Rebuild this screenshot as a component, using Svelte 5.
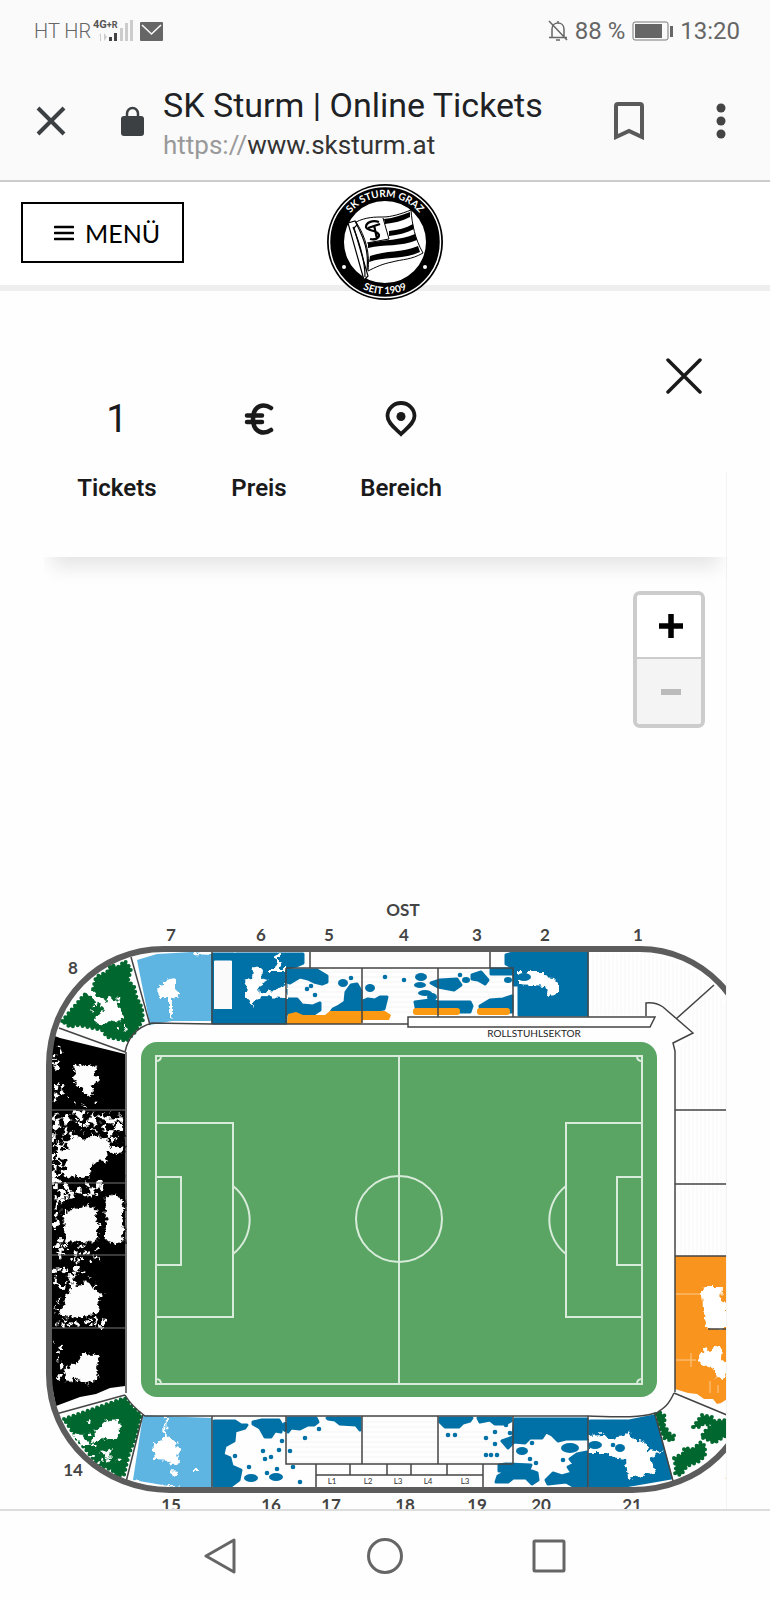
<script>
    let tickets = 1;
    let zoom = 0;

    const DARK = "#0071a6";
    const ORANGE = "#fb9a12";

    const labels = [
        ["OST", 403, 915], ["7", 171, 940], ["6", 261, 940], ["5", 329, 940],
        ["4", 404, 940], ["3", 477, 940], ["2", 545, 940], ["1", 638, 940],
        ["8", 73, 973], ["14", 73, 1475], ["15", 171, 1510], ["16", 271, 1510],
        ["17", 331, 1510], ["18", 405, 1510], ["19", 477, 1510],
        ["20", 541, 1510], ["21", 632, 1510], ["22", 735, 1478],
    ];

    const boxes = [["L1", 332], ["L2", 368], ["L3", 398], ["L4", 428], ["L3", 465]];

    const bluePaths = [
        // 6
        "M213 953H234L236 956 231 958H213V1009H233V959L236 953 303 953 303 962 296 965 286 967V1022H213Z",
        // 5
        "M287 969H304L317 969 327 975 327 981 322 983 314 981 308 978 300 976 290 982 287 981Z",
        "M287 998H297L302 1004 313 1005 320 1002 320 1009 314 1013H287Z",
        "M345 1001L346 991 351 984 357 983 361 990V1011H331L333 1008 339 1005Z",
        "M363 1000L368 998 375 999 380 996 387 996 386 1000 384 1008 363 1011Z",
        // 3
        "M431 982L440 979 457 978 461 984 454 989 438 986Z",
        "M472 974L481 971 488 979 485 983 478 979 472 978Z",
        "M491 968H512V973H491Z",
        "M415 1001L430 999 438 1001H470L472 1005 470 1011H417Z",
        "M480 1005L490 999 503 998 512 995V1011H481Z",
        // 2
        "M506 954L513 952H587V1014H519V984L514 984V967L506 963Z",
        // 16
        "M214 1420H235L241 1424 247 1424 245 1427 235 1430 234 1440 225 1445 223 1454 230 1457 232 1465 241 1469 239 1479 231 1485H214Z",
        "M253 1421L262 1419H279L282 1424 281 1431 275 1430 271 1436 265 1436 260 1427 253 1423Z",
        // 17
        "M288 1417H316L318 1421 314 1424 308 1424 300 1428 291 1427 288 1431Z",
        "M327 1417H360V1429L356 1424 340 1423 335 1419 328 1418Z",
        // 19
        "M440 1417H472L470 1420 463 1422 459 1426 445 1426 440 1421Z",
        "M478 1417H511V1420L505 1423 495 1423 490 1419 480 1421Z",
        // 20
        "M515 1418H587V1438H566L558 1440 552 1434 546 1431 542 1437 530 1437 525 1442 514 1441 508 1447 502 1440 513 1436Z",
        "M499 1464L506 1463 531 1464 529 1469 537 1472 538 1479 532 1483 526 1477 513 1477 508 1481 496 1481 498 1475 507 1470 499 1470Z",
        "M546 1479L553 1472 562 1475 572 1472 568 1466 574 1463 570 1458 577 1453 587 1451V1485H573L566 1481 548 1483Z",
        // 21
        "M590 1420H629L654 1415 671 1477 625 1485H590Z",
    ];

    const greenPaths = [
        "M62 1020L84 994 93 988 96 976 107 971 111 964 118 966 125 960 131 968 128 980 134 985 136 995 142 1007 143 1019 135 1031 127 1040 107 1036 102 1029 77 1024 70 1026Z",
        "M64 1418L125 1397 131 1405 141 1414 135 1438 129 1453 124 1474 117 1476 112 1469 98 1464 87 1450 77 1438Z",
        "M656 1413L659 1411 665 1415 664 1424 670 1433 675 1435 672 1440 664 1437 660 1427Z",
        "M674 1457L684 1452 684 1447 693 1448 701 1441 705 1445 705 1455 698 1461 687 1465 681 1474 675 1473 676 1467Z",
        "M693 1426L702 1414 712 1416 714 1420 727 1419V1434L714 1442 708 1439 701 1436 706 1429 713 1424 703 1423 700 1426Z",
    ];

    const whiteHoles = [
        // 8 and 7
        "M95 1015L104 1010 99 1002 84 991 88 986 97 994 106 1000 108 996 113 999 120 1005 121 1010 124 1016 119 1022 110 1019 103 1025 97 1022Z",
        "M157 985L164 984 165 979 175 977V989L180 994 172 997V1017L170 1019H169L169 998 158 998Z",
        "M192 951H212V954L193 953Z",
        // 6
        "M253 967L257 965 262 970 261 978 269 979 258 986 259 993 272 990 282 986 287 982V997L262 996 253 1000V1009L251 1000 245 997 248 987 244 980 252 977Z",
        "M268 967H275L277 960 275 955 279 952 279 960 282 960 280 967H286V970H268Z",
        // 2
        "M518 971H544V976L554 977 558 981V993L548 995 545 985 533 984 518 983Z",
        // 14 and 15
        "M94 1429L103 1425 105 1417 112 1420 119 1418 120 1432 115 1438 106 1437 98 1440 90 1443 95 1434Z",
        "M101 1449L107 1451 112 1448 110 1453 111 1456 104 1455Z",
        "M72 1434L80 1431 86 1438 90 1443 83 1447 78 1440Z",
        "M86 1421L91 1419 90 1423Z",
        "M153 1441L160 1440 164 1437 165 1415H167L166 1433 176 1441 178 1448 183 1450 177 1454 180 1462 172 1463 170 1460 155 1459Z",
        "M170 1470L179 1471 172 1477Z",
        "M193 1468H199V1470H193Z",
        "M133 1479L160 1484 180 1487H134Z",
        // 21
        "M589 1434L603 1433 610 1438 624 1435 630 1429 633 1438 645 1441 648 1449 663 1451 650 1457 655 1472 628 1477 626 1458 612 1456 606 1452 589 1452Z",
        // right hand block
        "M701 1289L705 1286H722L721 1300 727 1302V1328H708L702 1309Z",
        "M697 1358L705 1347 710 1351 720 1345 722 1348 721 1357 727 1362V1370L722 1379 717 1378 713 1367 702 1363Z",
    ];

    const blackHoles = [
        "M73 1063L84 1063 97 1064 96 1074 103 1080 94 1083 94 1094 88 1097 83 1090 73 1083Z",
        "M56 1141L68 1137 78 1129 96 1133 108 1136 112 1146 124 1145V1152L109 1154 107 1164 94 1167 90 1178 62 1176 56 1160Z",
        "M62 1211L74 1206 88 1204 97 1207 100 1226 99 1241 84 1243 64 1242Z",
        "M104 1197L113 1192 124 1196V1243H114L104 1240Z",
        "M55 1299L68 1291 71 1285 64 1272 78 1273 82 1281 93 1272 96 1290 106 1292 99 1300 99 1312 86 1317 62 1317 54 1309Z",
        "M64 1366L78 1360 82 1351 101 1353 97 1364 100 1375 88 1385 79 1379 64 1381Z",
    ];

    const seatDots = [
        [307, 988], [311, 985], [315, 994], [351, 977], [385, 976], [404, 979],
        [460, 974], [263, 1450], [271, 1456], [279, 1449], [235, 1455], [249, 1466],
        [265, 1458], [277, 1468], [267, 1472], [300, 1481], [290, 1450], [305, 1437],
        [319, 1428], [293, 1466], [448, 1434], [455, 1434], [486, 1437], [495, 1431],
        [495, 1443], [486, 1454], [491, 1454], [497, 1454], [506, 1424], [510, 1432],
        [530, 1458], [536, 1462], [532, 1442], [563, 1459], [613, 1444], [282, 1440],
    ];

    const seatGroups = [
        [343, 982, 5, 4], [370, 987, 5, 4], [421, 976, 6, 4], [420, 984, 6, 3],
        [425, 992, 7, 3], [432, 996, 5, 4], [466, 979, 4, 3], [508, 979, 4, 3],
        [524, 976, 7, 4], [251, 1477, 7, 4], [276, 1476, 7, 4], [285, 1426, 3, 5],
        [522, 1450, 6, 4], [570, 1447, 9, 5], [595, 1444, 7, 4], [620, 1447, 5, 4],
    ];

    // small linear generator so the seat pattern is the same on every load
    function scatter(seed, n, x, y, w, h, min, max) {
        let s = seed * 7919;
        const next = () => {
            s = (s * 16807) % 2147483647;
            return s / 2147483647;
        };
        return Array.from({ length: n }, () => ({
            x: x + next() * w,
            y: y + next() * h,
            r: min + next() * (max - min),
        }));
    }

    const free = [
        ...scatter(411, 110, 54, 1112, 68, 28, 2, 4),
        ...scatter(97, 40, 53, 1138, 16, 42, 2, 3),
        ...scatter(53, 30, 54, 1182, 50, 16, 1, 3),
        ...scatter(71, 20, 54, 1196, 8, 50, 1, 2),
        ...scatter(29, 30, 56, 1242, 50, 18, 1, 2),
        ...scatter(83, 22, 54, 1266, 30, 22, 1, 3),
        ...scatter(37, 22, 54, 1314, 50, 12, 1, 2),
        ...scatter(19, 20, 53, 1045, 10, 60, 1, 2),
        ...scatter(61, 10, 54, 1340, 10, 50, 1, 2),
        ...scatter(113, 12, 70, 1094, 30, 12, 1, 1),
    ];
    const taken = [
        ...scatter(211, 46, 56, 1112, 66, 26, 2, 4),
        ...scatter(17, 16, 54, 1140, 12, 38, 1, 3),
        ...scatter(43, 26, 94, 1160, 28, 18, 3, 5),
        ...scatter(67, 8, 100, 1202, 4, 26, 2, 4),
        ...scatter(89, 12, 56, 1272, 40, 10, 2, 4),
        ...scatter(139, 10, 56, 1292, 8, 14, 1, 3),
    ];
    const greenFree = [
        ...scatter(313, 14, 92, 995, 34, 34, 1, 2),
        ...scatter(131, 14, 78, 1430, 50, 34, 1, 2),
    ];
</script>

<div class="screen">
    <header class="status">
        <div class="side">
            <span class="carrier">HT HR</span>
            <svg class="signal" viewBox="0 0 40 27" aria-hidden="true">
                <text x="0" y="12">4G<tspan class="plus">+R</tspan></text>
                <g fill="#ccc">
                    <path d="M5 21l3-4v8h-1v-6zM11 17v8l3-4z" />
                    <path d="M27 12h3v13h-3zM32 7h3v18h-3zM37 4h3v21h-3z" />
                </g>
                <path d="M16 21h3v4h-3zM21 17h3v8h-3z" fill="#444" />
            </svg>
            <svg class="mail" viewBox="0 0 23 19" aria-hidden="true">
                <rect width="23" height="19" rx="1" fill="#666" />
                <path d="M2 3l9.500 9L21 3" fill="none" stroke="#fafafa" stroke-width="1.600" />
            </svg>
        </div>
        <div class="side right">
            <svg class="bell" viewBox="0 0 20 22" aria-hidden="true">
                <path d="M4 17V9c0-4 3-6 6-6s6 2 6 6v8M1 17.500h18M8 20h4M10 1v2M1 1l18 19" fill="none" stroke="#666" stroke-width="1.500" />
            </svg>
            <span>88 %</span>
            <svg class="battery" viewBox="0 0 41 20" aria-hidden="true">
                <rect x="1" y="1" width="35" height="18" rx="2" fill="none" stroke="#777" />
                <path d="M3 3h27v14H3zM38 5h3v11h-3z" fill="#666" />
            </svg>
            <time>13:20</time>
        </div>
    </header>

    <div class="browser">
        <button class="icon" aria-label="Tab schließen">
            <svg width="30" height="30" viewBox="0 0 30 30"><path d="M2 2l26 26M28 2L2 28" fill="none" stroke="#3c4043" stroke-width="4" /></svg>
        </button>
        <svg class="lock" viewBox="0 0 23 30" aria-hidden="true">
            <rect y="10" width="23" height="20" rx="3" fill="#3c4043" />
            <path d="M6 11V7.500a5.500 5.500 0 0 1 11 0V11" fill="none" stroke="#3c4043" stroke-width="2.500" />
        </svg>
        <div class="address">
            <div class="title">SK Sturm | Online Tickets</div>
            <div class="url"><span>https://</span>www.sksturm.at</div>
        </div>
        <button class="icon" aria-label="Lesezeichen">
            <svg width="30" height="38" viewBox="0 0 30 38"><path d="M2 35V4q0-2 2-2h22q2 0 2 2v31l-13-6z" fill="none" stroke="#5a5a5a" stroke-width="4" /></svg>
        </button>
        <button class="icon more" aria-label="Mehr">
            <svg width="10" height="36" viewBox="0 0 10 36" fill="#444"><circle cx="5" cy="5" r="4.500" /><circle cx="5" cy="18" r="4.500" /><circle cx="5" cy="31" r="4.500" /></svg>
        </button>
    </div>

    <nav class="site">
        <button class="menu">
            <svg width="20" height="16" viewBox="0 0 20 16" aria-hidden="true"><path d="M1 2h18M1 8h18M1 14h18" stroke="#000" stroke-width="2.600" stroke-linecap="round" /></svg>
            MENÜ
        </button>
        <a class="crest" href="#start" aria-label="SK Sturm Graz">
            <svg viewBox="0 0 116 116">
                <defs>
                    <path id="arc-top" d="M13 58a45 45 0 0 1 90 0" />
                    <path id="arc-bottom" d="M6 58a52 52 0 0 0 104 0" />
                </defs>
                <circle cx="58" cy="58" r="58" fill="#000" />
                <circle cx="58" cy="58" r="55.500" fill="none" stroke="#fff" stroke-width="1.500" />
                <circle cx="58" cy="58" r="41" fill="#fff" />
                <text class="ring"><textPath href="#arc-top" startOffset="50%">SK STURM GRAZ</textPath></text>
                <text class="ring"><textPath href="#arc-bottom" startOffset="50%">SEIT 1909</textPath></text>
                <circle cx="17" cy="83" r="2" fill="#fff" />
                <circle cx="98" cy="83" r="2" fill="#fff" />
                <path d="M29 38c10-5 19-5 27-5s18-3 28-7c1 14 4 29 12 43-12 7-20 6-31 9-10 2-16 5-24 9 2-17-2-34-12-49z" fill="#fff" stroke="#000" stroke-width="1" />
                <path d="M57 35c10-1 18-4 26-7v5c-8 4-16 6-25 7zM62 47c9-1 17-3 24-7l1 5c-8 4-16 6-25 7zM41 59c18-4 31-2 47-9l2 6c-17 7-32 4-49 8zM43 72c17-6 31-3 48-10l2 6c-18 8-34 4-51 10z" />
                <path d="M56 34l6 21-22 4" fill="none" stroke="#000" stroke-width="1" />
                <path d="M52 38c-6-2-13 0-13 5 0 4 12 3 13 8 0 4-5 5-9 4M41 44l12-4M47 41l3 14" fill="none" stroke="#000" stroke-width="2.200" />
                <path d="M21 39l7-2 2 4-3 3 14 48-4 4z" fill="#fff" stroke="#000" stroke-width="1.200" />
                <path d="M26 43c7 17 12 34 12 50M30 41c7 14 12 26 10 45" fill="none" stroke="#000" stroke-width="1.200" />
            </svg>
        </a>
    </nav>

    <main class="booking">
        <section class="filter">
            <div class="close-row">
                <button class="icon" aria-label="Schließen">
                    <svg width="36" height="36" viewBox="0 0 36 36"><path d="M2 2l32 32M34 2L2 34" stroke="#1a1a1a" stroke-width="3.500" stroke-linecap="round" /></svg>
                </button>
            </div>
            <div class="steps">
                <button>
                    <span class="glyph">{tickets}</span>
                    <span>Tickets</span>
                </button>
                <button>
                    <span class="glyph">
                        <svg width="30" height="32" viewBox="0 0 30 32"><path d="M27 5C20 0 9 2 9 16s11 16 18 11M3 12.500h15M3 19h15" fill="none" stroke="#1a1a1a" stroke-width="4.500" stroke-linecap="round" /></svg>
                    </span>
                    <span>Preis</span>
                </button>
                <button>
                    <span class="glyph">
                        <svg width="32" height="36" viewBox="0 0 32 36"><path d="M16 33C10 27 2.500 22 2.500 15a13.500 13 0 0 1 27 0C29.500 22 22 27 16 33z" fill="none" stroke="#1a1a1a" stroke-width="3.800" /><circle cx="16" cy="15.500" r="4.500" fill="#1a1a1a" /></svg>
                    </span>
                    <span>Bereich</span>
                </button>
            </div>
        </section>

        <section class="plan">
            <div class="zoom">
                <button aria-label="Vergrößern" on:click={() => (zoom += 1)}>
                    <svg width="24" height="24" viewBox="0 0 24 24"><path d="M12 0v24M0 12h24" stroke="#000" stroke-width="5.500" /></svg>
                </button>
                <button aria-label="Verkleinern" disabled={zoom === 0} on:click={() => (zoom -= 1)}>
                    <svg width="24" height="24" viewBox="0 0 24 24"><path d="M2 12h20" stroke="#bbb" stroke-width="6" /></svg>
                </button>
            </div>

            <svg class="stadium" viewBox="44 889 682 619" role="img" aria-label="Stadionplan">
                <defs>
                    <pattern id="rows" width="6" height="5" patternUnits="userSpaceOnUse">
                        <path d="M0 1h6" stroke="#f4f4f4" />
                    </pattern>
                    <pattern id="columns" width="4" height="6" patternUnits="userSpaceOnUse">
                        <path d="M1 0v6" stroke="#f8f8f8" />
                    </pattern>
                    <filter id="ragged" x="0" y="0" width="100%" height="100%">
                        <feTurbulence type="fractalNoise" baseFrequency="0.18" numOctaves="2" seed="4" />
                        <feDisplacementMap in="SourceGraphic" scale="8" xChannelSelector="R" yChannelSelector="G" />
                    </filter>
                </defs>

                <path d="M590 952H640C690 956 715 985 727 1005V1254H676V1050L692 1032 662 1006 646 1003V1014H590Z" fill="url(#columns)" />
                <path d="M363 1416H437V1462H363ZM288 1430H361V1462H288ZM440 1430H512V1462H440ZM288 969H512V1012H288Z" fill="url(#rows)" />

                <path d="M137 959L157 953 192 951 212 953V1020L172 1020 150 1024Z" fill="#5fb5e2" />
                <path d="M143 1414L160 1415 212 1417V1487H180L133 1479Z" fill="#5fb5e2" />
                <g fill={DARK} stroke={DARK} stroke-width="3" stroke-linejoin="round">
                    {#each bluePaths as d}
                        <path {d} />
                    {/each}
                </g>
                <path d="M214 960H232V1008H214Z" fill="#fafafa" />
                <path class="scallop green" d={greenPaths.join("")} />
                <path d="M675 1255H727V1398L721 1402 717 1403 713 1398 704 1398 697 1393 688 1392 675 1388Z" fill="#f9941e" />
                <path d="M52 1034L60 1037 125 1053V1385L110 1387 96 1393 80 1396 56 1405 52 1385Z" fill="#000" />

                <g filter="url(#ragged)">
                    <!-- transparent frame keeps the filter region on the whole plan -->
                    <rect x="44" y="890" width="683" height="618" fill="none" stroke="none" />
                    <g fill="#fff">
                        {#each whiteHoles as d}
                            <path {d} />
                        {/each}
                        {#each [...free, ...greenFree] as s}
                            <circle cx={s.x} cy={s.y} r={s.r} />
                        {/each}
                    </g>
                    <path class="scallop black" d={blackHoles.join("")} />
                    {#each taken as s}
                        <circle cx={s.x} cy={s.y} r={s.r} />
                    {/each}
                </g>

                <g fill={DARK}>
                    {#each seatDots as [x, y]}
                        <circle cx={x} cy={y} r="2.300" />
                    {/each}
                    {#each seatGroups as [x, y, rx, ry]}
                        <ellipse cx={x} cy={y} {rx} {ry} />
                    {/each}
                </g>
                <path d="M288 1013L296 1011 303 1014 325 1014 330 1010 385 1010 391 1014 389 1019 363 1019 361 1023H287Z" fill={ORANGE} />
                <rect x="413" y="1007" width="47" height="7" rx="3" fill={ORANGE} />
                <rect x="477" y="1007" width="33" height="7" rx="3" fill={ORANGE} />
                <path d="M676 1293H700M676 1359H696M691 1352v14M710 1380v12M718 1384v8" stroke="#fff" stroke-width="1" opacity=".5" />

                <g class="lines">
                    <path d="M131 956L150 1024M59 1027L125 1051M125 1051C128 1036 138 1026 152 1022L212 1023H408M126 1051V1392" />
                    <path d="M212 951V1023M286 967V1022M310 951V967M490 951V967M286 967H513V1016M362 967V1022M438 967V1016M588 951V1016" />
                    <path d="M408 1016H655L650 1026H408Z" fill="#fff" />
                    <path d="M646 1015V1002C655 1001 660 1004 663 1006L693 1032 673 1042 675 1050V1391M714 984L676 1018M675 1109H727M675 1183H727M675 1255H727M708 1328H727" />
                    <path d="M674 1392L727 1414M674 1392C668 1405 664 1407 655 1413L673 1480M655 1412C640 1417 620 1416 588 1415H145C137 1409 130 1403 125 1394M56 1413L125 1394M143 1413L126 1481" />
                    <path d="M212 1415V1487M286 1415V1463H513M362 1415V1463M438 1415V1463M513 1415V1463M588 1415V1487M316 1463V1487M483 1463V1487M316 1474H483M350 1463V1474M387 1463V1474M411 1463V1474M447 1463V1474" />
                    <path d="M52 1109H126M52 1182H126M52 1254H126M52 1327H126" stroke="#777" stroke-width="1" />
                </g>

                <path class="outline" d="M164 948H640C702 948 752 1000 752 1064V1373C752 1440 700 1489 632 1489H170C104 1489 49 1440 49 1373V1064C49 1000 98 948 164 948Z" />

                <rect x="141" y="1041" width="516" height="355" rx="16" fill="#5aa564" />
                <g class="chalk">
                    <rect x="156" y="1055" width="486" height="328" />
                    <path d="M399 1055V1383M156 1122H233V1316H156M156 1176H181V1264H156M642 1122H566V1316H642M642 1176H617V1264H642" />
                    <path d="M233 1185A43 43 0 0 1 233 1253M566 1185A43 43 0 0 0 566 1253" />
                    <circle cx="399" cy="1218" r="43" />
                    <path d="M156 1060q5 0 5-5M642 1060q-5 0-5-5M156 1378q5 0 5 5M642 1378q-5 0-5 5" />
                </g>

                {#each labels as [text, x, y]}
                    <text class="label" {x} {y}>{text}</text>
                {/each}
                {#each boxes as [text, x]}
                    <text class="tiny" {x} y="1483">{text}</text>
                {/each}
                <text class="wheelchair" x="534" y="1036">ROLLSTUHLSEKTOR</text>
            </svg>
        </section>
    </main>

    <footer class="system">
        <button class="icon" aria-label="Zurück">
            <svg width="36" height="36" viewBox="0 0 36 36"><path d="M31 2v32L3 18z" /></svg>
        </button>
        <button class="icon" aria-label="Startseite">
            <svg width="36" height="36" viewBox="0 0 36 36"><circle cx="18" cy="18" r="16.500" /></svg>
        </button>
        <button class="icon" aria-label="Übersicht">
            <svg width="36" height="36" viewBox="0 0 36 36"><rect x="3" y="3" width="30" height="30" rx="1" /></svg>
        </button>
    </footer>
</div>

<style>
    :global(body) {
        margin: 0;
        background: #fefefe;
        color: #1a1a1a;
        font-family: Roboto, "Liberation Sans", sans-serif;
    }

    svg {
        display: block;
        flex: none;
    }

    button {
        font: inherit;
        color: inherit;
        cursor: pointer;
    }

    .icon {
        padding: 0;
        border: 0;
        background: none;
    }

    .screen {
        display: flex;
        flex-direction: column;
        min-height: 100vh;
    }

    .status {
        display: flex;
        justify-content: space-between;
        align-items: center;
        height: 62px;
        padding: 0 30px 0 34px;
        background: #fafafa;
        color: #666;
        font-size: 24px;
    }

    .side {
        display: flex;
        align-items: center;
    }

    .right {
        gap: 7px;
    }

    .carrier {
        font-size: 20px;
        font-weight: 300;
    }

    .signal {
        width: 40px;
        height: 27px;
        margin: 0 7px 4px 2px;
    }

    .signal text {
        font-size: 11px;
        font-weight: 700;
        fill: #555;
    }

    .signal .plus {
        font-size: 9px;
    }

    .mail {
        width: 23px;
        height: 19px;
    }

    .bell {
        width: 20px;
        height: 22px;
    }

    .battery {
        width: 41px;
        height: 20px;
    }

    .browser {
        display: flex;
        align-items: center;
        height: 118px;
        padding: 0 44px 0 36px;
        background: #fafafa;
        border-bottom: 2px solid #ccc;
    }

    .lock {
        width: 23px;
        height: 30px;
        margin: 0 19px 0 55px;
    }

    .address {
        flex: 1;
        min-width: 0;
        padding-top: 3px;
        white-space: nowrap;
    }

    .title {
        font-size: 34px;
        line-height: 44px;
        color: #202124;
    }

    .url {
        font-size: 26px;
        line-height: 36px;
        color: #333;
    }

    .url span {
        color: #999;
    }

    .more {
        margin-left: 72px;
    }

    .site {
        display: grid;
        grid-template-columns: 1fr auto 1fr;
        align-items: start;
        height: 103px;
        padding: 0 21px;
        background: #fff;
        border-bottom: 6px solid #eee;
    }

    .menu {
        display: flex;
        justify-self: start;
        align-items: center;
        gap: 11px;
        height: 61px;
        margin-top: 20px;
        padding: 0 22px 0 31px;
        border: 2px solid #000;
        background: #fff;
        color: #000;
        font-family: Lato, sans-serif;
        font-size: 25px;
    }

    .crest {
        position: relative;
        z-index: 2;
        width: 116px;
        height: 116px;
        margin-top: 2px;
    }

    .ring {
        font-family: Lato, sans-serif;
        font-size: 10px;
        font-weight: 700;
        fill: #fff;
        text-anchor: middle;
    }

    .booking {
        flex: 1;
        margin: 0 43px 0 44px;
        overflow: hidden;
    }

    .filter {
        position: relative;
        z-index: 1;
        padding: 67px 0 55px;
        background: linear-gradient(#f3f3f3, #f3f3f3) right 181px / 1px 100% no-repeat #fefefe;
        box-shadow: 0 18px 18px -8px rgba(0, 0, 0, 0.1);
    }

    .close-row {
        display: flex;
        justify-content: flex-end;
        padding-right: 25px;
    }

    .steps {
        display: grid;
        grid-template-columns: repeat(3, 142px);
        margin-top: 7px;
        padding-left: 2px;
    }

    .steps button {
        display: flex;
        flex-direction: column;
        align-items: center;
        gap: 37px;
        padding: 0;
        border: 0;
        background: none;
        font-size: 24px;
        line-height: 28px;
        font-weight: 600;
    }

    .glyph {
        display: flex;
        align-items: center;
        height: 36px;
        font-size: 38px;
        font-weight: 400;
    }

    .plan {
        position: relative;
        padding-top: 333px;
        border-right: 1px solid #f3f3f3;
    }

    .zoom {
        position: absolute;
        top: 34px;
        right: 21px;
        display: grid;
        width: 64px;
        border: 4px solid #ccc;
        border-radius: 7px;
        overflow: hidden;
    }

    .zoom button {
        display: grid;
        place-items: center;
        height: 62px;
        padding: 0 0 0 4px;
        border: 0;
        background: #fff;
    }

    .zoom button + button {
        height: 67px;
        border-top: 2px solid #ccc;
        background: #f4f4f4;
    }

    .stadium {
        width: 100%;
        height: auto;
    }

    .scallop {
        stroke-linecap: round;
        stroke-dasharray: 0 5;
        stroke-width: 4;
    }

    .green {
        fill: #00682f;
        stroke: #00682f;
    }

    .black {
        fill: #fdfdfd;
        stroke: #000;
    }

    .lines {
        fill: none;
        stroke: #444;
        stroke-width: 1.5;
    }

    .outline {
        fill: none;
        stroke: #5c5c5c;
        stroke-width: 6;
    }

    .chalk {
        fill: none;
        stroke: #d9ecdb;
        stroke-width: 2;
    }

    .label {
        font-family: Lato, sans-serif;
        font-size: 17px;
        font-weight: 700;
        fill: #444;
        text-anchor: middle;
    }

    .tiny {
        font-family: Lato, sans-serif;
        font-size: 8px;
        fill: #333;
        text-anchor: middle;
    }

    .wheelchair {
        font-family: Lato, sans-serif;
        font-size: 10px;
        fill: #222;
        text-anchor: middle;
    }

    .system {
        display: flex;
        justify-content: center;
        align-items: center;
        gap: 128px;
        height: 89px;
        border-top: 2px solid #ddd;
        background: #fefefe;
    }

    .system svg {
        fill: none;
        stroke: #666;
        stroke-width: 3;
        stroke-linejoin: round;
    }
</style>
